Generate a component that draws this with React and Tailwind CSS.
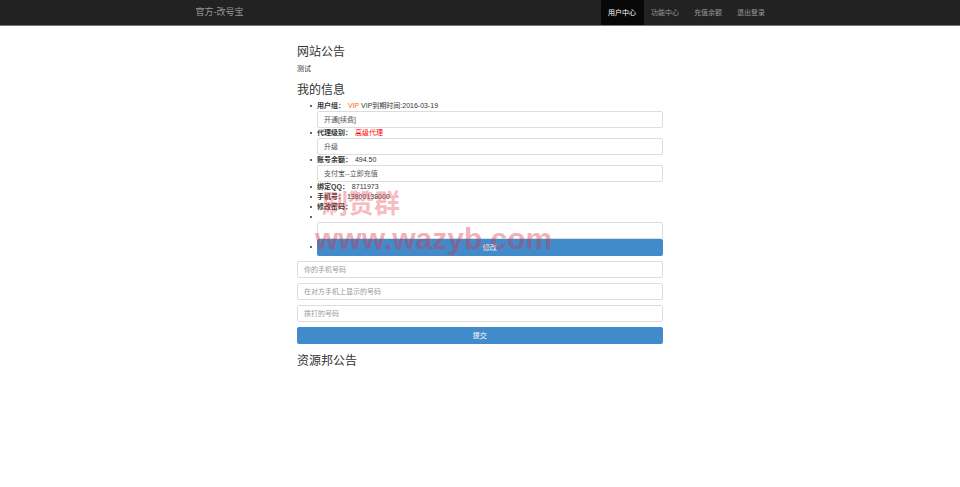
const font = { fontFamily: '"Liberation Sans", "Noto Sans CJK SC", sans-serif' }

function Input({ value, placeholder }) {
  return (
    <div className={`h-[17px] w-full rounded-[2px] border border-[#ddd] bg-white px-[6px] text-[7px] leading-[15px] ${placeholder ? 'text-[#999]' : 'text-[#555]'}`}>
      {value || placeholder}
    </div>
  )
}

function Button({ children }) {
  return (
    <div className="h-[17px] w-full rounded-[2px] bg-[#428bca] text-center text-[7px] leading-[17px] text-white">
      {children}
    </div>
  )
}

function Bullet({ children }) {
  return (
    <li className="relative h-[10px] leading-[10px]">
      <span className="absolute left-[-7px] top-[4px] h-[2px] w-[2px] rounded-full bg-[#333]" />
      {children}
    </li>
  )
}

export default function App() {
  return (
    <div className="relative h-[487px] w-[960px] overflow-hidden bg-white text-[7px] text-[#333]" style={font}>
      <header className="flex h-[26px] justify-center border-b border-[#777] bg-[#222]">
        <div className="flex w-[585px] justify-between pl-[8px] pr-0">
          <span className="text-[9px] leading-[25px] text-[#999]">官方-改号宝</span>
          <nav className="flex text-[7px] leading-[25px] text-[#999]">
            <span className="bg-[#080808] px-[7.5px] text-white">用户中心</span>
            <span className="px-[7.5px]">功能中心</span>
            <span className="px-[7.5px]">充值余额</span>
            <span className="px-[7.5px]">退出登录</span>
          </nav>
        </div>
      </header>

      <main className="ml-[297px] w-[365.5px]">
        <h3 className="mt-[18px] text-[12px] leading-[16px]">网站公告</h3>
        <p className="mt-[4px] leading-[10px]">测试</p>
        <h3 className="mt-[8px] text-[12px] leading-[16px]">我的信息</h3>
        <ul className="ml-[20px] mt-[3px]">
          <Bullet><b className="font-semibold">用户组：</b> <span className="ml-[1px] text-[#f60]">VIP</span> VIP到期时间:2016-03-19</Bullet>
          <Input value="开通[续费]" />
          <Bullet><b className="font-semibold">代理级别：</b> <span className="ml-[1px] text-[#f00]">高级代理</span></Bullet>
          <Input value="升级" />
          <Bullet><b className="font-semibold">账号余额：</b> <span className="ml-[1px]">494.50</span></Bullet>
          <Input value="支付宝--立即充值" />
          <Bullet><b className="font-semibold">绑定QQ：</b> <span className="ml-[1px]">8711973</span></Bullet>
          <Bullet><b className="font-semibold">手机号：</b> 13800138000</Bullet>
          <Bullet><b className="font-semibold">修改密码：</b></Bullet>
          <Bullet />
          <Input />
          <li className="relative">
            <span className="absolute left-[-7px] top-[7px] h-[2px] w-[2px] rounded-full bg-[#333]" />
            <Button>修改</Button>
          </li>
        </ul>
        <div className="mt-[5px] flex flex-col gap-[5px]">
          <Input placeholder="你的手机号码" />
          <Input placeholder="在对方手机上显示的号码" />
          <Input placeholder="拨打的号码" />
          <Button>提交</Button>
        </div>
        <h3 className="mt-[9px] text-[12px] leading-[16px]">资源邦公告</h3>
      </main>

      {/* 水印 */}
      <div className="pointer-events-none absolute left-[322px] top-[187px] text-[26px] font-bold leading-[34px] text-[#e8505b]/40">刷赞群</div>
      <div className="pointer-events-none absolute left-[315px] top-[221px] text-[30px] font-bold leading-[36px] text-[#d8304b]/40">www.wazyb.com</div>
    </div>
  )
}
